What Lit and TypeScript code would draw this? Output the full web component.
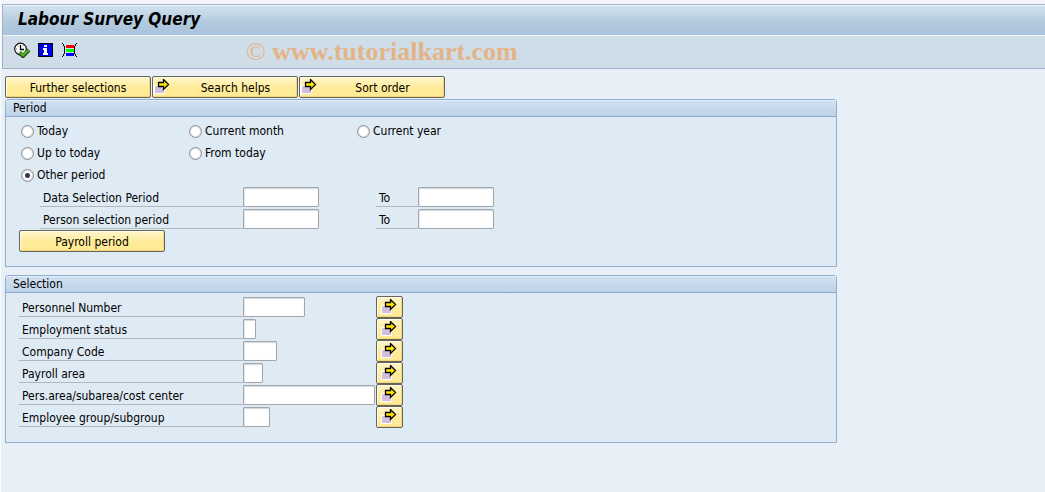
import { LitElement, html, css } from "lit";
import { customElement, property, state } from "lit/decorators.js";
import { styleMap } from "lit/directives/style-map.js";

const arrowIcon = html`<svg class="arrow" width="16" height="16" viewBox="0 0 16 16" aria-hidden="true">
  <rect x="0" y="6" width="11" height="9" fill="#fff" />
  <rect x="1" y="7" width="9" height="7" fill="#d2bfdc" />
  <path d="M4.5 3.5H9.5V.5L14.5 5.5L9.5 10.5V7.5H4.5Z" fill="#ffe800" stroke="#000" stroke-width="1.3" />
</svg>`;

const executeIcon = html`<svg width="16" height="16" viewBox="0 0 16 16" aria-hidden="true">
  <circle cx="6.5" cy="7" r="5.8" fill="#fff" stroke="#111" stroke-width="1.2" />
  <path d="M6.5 3V7.5H10" fill="none" stroke="#000" stroke-width="1.3" />
  <path d="M2 7h1M6 11.5h1M3.5 3.5l.7.7M9.5 3.5l-.7.7M3.5 10.5l.7-.7" stroke="#777" stroke-width="1" />
  <path d="M5.5 10.5L9 14L15 8" fill="none" stroke="#1d4d10" stroke-width="4" />
  <path d="M6.2 10.7L9 13.3L14.6 8" fill="none" stroke="#58b52a" stroke-width="2.2" />
</svg>`;

const infoIcon = html`<svg width="16" height="16" viewBox="0 0 16 16" aria-hidden="true" shape-rendering="crispEdges">
  <rect x="0" y="1" width="15" height="14" fill="#000" />
  <rect x="1" y="2" width="13" height="12" fill="#0000f0" />
  <path d="M6 3h3v2H6zM5 6h4v5h1v2H5v-2h1V8H5z" fill="#fff" />
</svg>`;

const variantIcon = html`<svg width="16" height="16" viewBox="0 0 16 16" aria-hidden="true" shape-rendering="crispEdges">
  <path d="M0 1h1v1H0zM1 2h1v2H1zM2 4h1v8H2zM1 12h1v2H1zM0 14h1v1H0z" fill="#000" />
  <path d="M14 1h1v1h-1zM13 2h1v2h-1zM12 4h1v8h-1zM13 12h1v2h-1zM14 14h1v1h-1z" fill="#000" />
  <rect x="4" y="3" width="8" height="3" fill="#f00" />
  <rect x="4" y="7" width="8" height="3" fill="#0f0" />
  <rect x="4" y="11" width="8" height="3" fill="#00f" />
</svg>`;

const buttonStyles = css`
  .button {
    box-sizing: border-box;
    display: inline-flex;
    align-items: center;
    height: 22px;
    padding: 0 1px;
    border: 1px solid #66655c;
    border-radius: 2px;
    background: linear-gradient(#fff5cc, #ffeb98 55%, #ffea94);
    box-shadow: inset 1px 1px 0 #fffbe6, inset -1px -1px 0 #f4d878;
    color: #000;
    font: inherit;
    line-height: 16px;
  }
  .wide {
    width: 146px;
  }
  .caption {
    flex: 1;
    padding-top: 1px;
    text-align: center;
  }
`;

@customElement("group-box")
class GroupBox extends LitElement {
  @property() heading = "";

  static styles = css`
    :host {
      display: block;
    }
    .group {
      border: 1px solid #8fafd0;
      border-radius: 3px 3px 0 0;
      background: #deeaf4;
    }
    .heading {
      margin: 0;
      padding: 0 7px;
      height: 16px;
      border-bottom: 1px solid #8aa9cb;
      border-radius: 2px 2px 0 0;
      background: linear-gradient(#d2e1f0, #bdd3e9);
      box-shadow: inset 0 1px 0 #e4eef8;
      font-size: 12px;
      font-weight: normal;
      line-height: 16px;
    }
    .body {
      padding: 3px 13px 14px;
    }
  `;

  render() {
    return html`<section class="group">
      <h2 class="heading">${this.heading}</h2>
      <div class="body"><slot></slot></div>
    </section>`;
  }
}

@customElement("app-root")
class AppRoot extends LitElement {
  @state() private period = "Other period";

  private periods = ["Today", "Current month", "Current year", "Up to today", "From today", "Other period"];

  private ranges = ["Data Selection Period", "Person selection period"];

  private criteria = [
    { name: "Personnel Number", width: 62 },
    { name: "Employment status", width: 13 },
    { name: "Company Code", width: 34 },
    { name: "Payroll area", width: 20 },
    { name: "Pers.area/subarea/cost center", width: 132 },
    { name: "Employee group/subgroup", width: 27 },
  ];

  static styles = [
    buttonStyles,
    css`
      :host {
        display: block;
        box-sizing: border-box;
        min-height: 100vh;
        border-left: 1px solid #fafbfd;
        background: #e8eff7;
        color: #000;
        font-family: "DejaVu Sans Condensed", "DejaVu Sans", sans-serif;
        font-size: 12px;
        line-height: 16px;
      }
      .top {
        position: relative;
        padding-top: 4px;
        background: #f4f6fb;
      }
      .frame {
        margin-left: 1px;
        border: 1px solid #9fb3cb;
        border-right: 0;
      }
      .title {
        margin: 0;
        padding: 0 15px 3px;
        border: 1px solid #eef5fb;
        border-width: 1px 0;
        background: linear-gradient(#d2e3f0, #bfd3e2 35%, #b3cade 55%, #aac2dc);
        font-size: 17px;
        font-style: italic;
        font-weight: bold;
        line-height: 26px;
      }
      .tools {
        display: flex;
        gap: 8px;
        padding: 6px 11px 10px;
        background: #cfdde8;
      }
      .tool {
        display: block;
        padding: 0;
        border: 0;
        background: none;
        height: 16px;
      }
      .tool svg {
        display: block;
      }
      .watermark {
        position: absolute;
        left: 245px;
        top: 36px;
        color: #e3b487;
        font-family: "Liberation Serif", serif;
        font-size: 26px;
        font-weight: bold;
        line-height: 32px;
        white-space: nowrap;
        pointer-events: none;
      }
      .sign {
        font-weight: normal;
      }
      .content {
        max-width: 832px;
        padding: 7px 4px 16px;
      }
      .actions {
        display: flex;
        gap: 1px;
        margin-bottom: 1px;
      }
      .selection {
        margin-top: 8px;
      }
      .arrow {
        flex: none;
        margin-bottom: 1px;
      }
      .arrow + .caption {
        margin-left: 5px;
      }
      .periods {
        display: grid;
        grid-template-columns: repeat(3, 168px);
        grid-auto-rows: 22px;
        padding: 0 2px 1px;
      }
      .period {
        display: flex;
        align-items: center;
        gap: 3px;
      }
      .period:nth-child(6) {
        grid-column: 1;
      }
      .radio {
        appearance: none;
        box-sizing: border-box;
        width: 13px;
        height: 13px;
        margin: 0;
        border: 1px solid #8c8f94;
        border-radius: 50%;
        background: #fff;
        box-shadow: inset 0 0 1px 1px #dcdfe3;
      }
      .radio:checked {
        background: radial-gradient(circle, #33384a 2px, #fff 3px);
      }
      .ranges {
        display: grid;
        gap: 2px;
        margin: 0 0 1px 21px;
      }
      .row {
        display: flex;
        align-items: center;
      }
      .label {
        box-sizing: border-box;
        height: 20px;
        padding: 3px 3px 0;
        border-bottom: 1px solid #b3b7bb;
        white-space: nowrap;
      }
      .range {
        width: 203px;
      }
      .to {
        width: 42px;
      }
      .criterion {
        width: 224px;
      }
      .field {
        width: 133px;
        height: 20px;
      }
      .input {
        display: block;
        box-sizing: border-box;
        height: 20px;
        padding: 0 2px;
        border: 1px solid #a3a6aa;
        border-radius: 1px;
        background: #fff;
        box-shadow: inset 0 1px 1px #d5d7da, inset 1px 0 1px #e6e8ea;
        font: inherit;
      }
      .date {
        width: 76px;
      }
      .more {
        width: 27px;
        padding: 0 4px;
      }
    `,
  ];

  render() {
    return html`
      <header class="top">
        <div class="frame">
          <h1 class="title">Labour Survey Query</h1>
          <div class="tools">
            <button class="tool" aria-label="Execute">${executeIcon}</button>
            <button class="tool" aria-label="Information">${infoIcon}</button>
            <button class="tool" aria-label="Variants">${variantIcon}</button>
          </div>
        </div>
        <div class="watermark"><span class="sign">©</span> www.tutorialkart.com</div>
      </header>
      <main class="content">
        <div class="actions">
          <button class="button wide"><span class="caption">Further selections</span></button>
          <button class="button wide">${arrowIcon}<span class="caption">Search helps</span></button>
          <button class="button wide">${arrowIcon}<span class="caption">Sort order</span></button>
        </div>
        <group-box heading="Period">
          <div class="periods">
            ${this.periods.map(
              (name) => html`<label class="period">
                <input
                  class="radio"
                  type="radio"
                  name="period"
                  .checked=${this.period === name}
                  @change=${() => (this.period = name)}
                />${name}</label>`
            )}
          </div>
          <div class="ranges">
            ${this.ranges.map(
              (name, i) => html`<div class="row">
                <label class="label range" for="from-${i}">${name}</label>
                <div class="field"><input class="input date" id="from-${i}" /></div>
                <label class="label to" for="to-${i}">To</label>
                <input class="input date" id="to-${i}" />
              </div>`
            )}
          </div>
          <button class="button wide"><span class="caption">Payroll period</span></button>
        </group-box>
        <group-box class="selection" heading="Selection">
          ${this.criteria.map(
            (c, i) => html`<div class="row">
              <label class="label criterion" for="criterion-${i}">${c.name}</label>
              <div class="field">
                <input class="input" id="criterion-${i}" style=${styleMap({ width: `${c.width}px` })} />
              </div>
              <button class="button more" aria-label="Multiple selection: ${c.name}">${arrowIcon}</button>
            </div>`
          )}
        </group-box>
      </main>
    `;
  }
}
